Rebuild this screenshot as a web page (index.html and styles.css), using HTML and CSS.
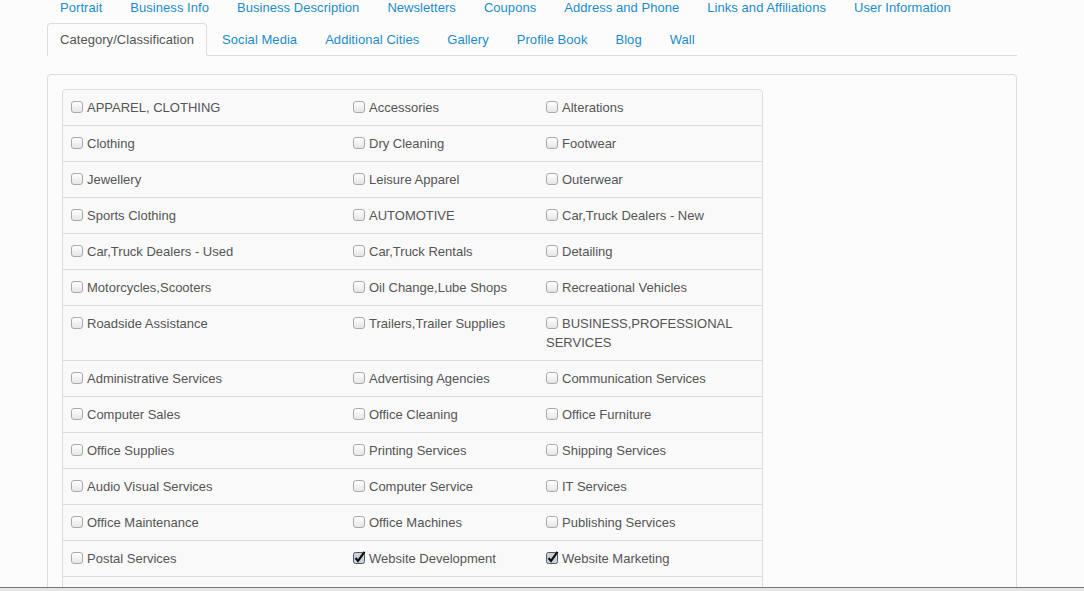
FILE: index.html
```html
<!DOCTYPE html>
<html>
<head>
<meta charset="utf-8">
<link rel="stylesheet" href="styles.css">
</head>
<body>
<div class="page">
  <ul class="nav-tabs">
    <li><a>Portrait</a></li>
    <li><a>Business Info</a></li>
    <li><a>Business Description</a></li>
    <li><a>Newsletters</a></li>
    <li><a>Coupons</a></li>
    <li><a>Address and Phone</a></li>
    <li><a>Links and Affiliations</a></li>
    <li><a>User Information</a></li>
    <li class="active"><a>Category/Classification</a></li>
    <li><a>Social Media</a></li>
    <li><a>Additional Cities</a></li>
    <li><a>Gallery</a></li>
    <li><a>Profile Book</a></li>
    <li><a>Blog</a></li>
    <li><a>Wall</a></li>
  </ul>
  <div class="panel">
    <table class="cats">
      <colgroup><col class="c1"><col class="c2"><col class="c3"></colgroup>
      <tr><td><span class="cb"></span>APPAREL, CLOTHING</td><td><span class="cb"></span>Accessories</td><td><span class="cb"></span>Alterations</td></tr>
      <tr><td><span class="cb"></span>Clothing</td><td><span class="cb"></span>Dry Cleaning</td><td><span class="cb"></span>Footwear</td></tr>
      <tr><td><span class="cb"></span>Jewellery</td><td><span class="cb"></span>Leisure Apparel</td><td><span class="cb"></span>Outerwear</td></tr>
      <tr><td><span class="cb"></span>Sports Clothing</td><td><span class="cb"></span>AUTOMOTIVE</td><td><span class="cb"></span>Car,Truck Dealers - New</td></tr>
      <tr><td><span class="cb"></span>Car,Truck Dealers - Used</td><td><span class="cb"></span>Car,Truck Rentals</td><td><span class="cb"></span>Detailing</td></tr>
      <tr><td><span class="cb"></span>Motorcycles,Scooters</td><td><span class="cb"></span>Oil Change,Lube Shops</td><td><span class="cb"></span>Recreational Vehicles</td></tr>
      <tr><td><span class="cb"></span>Roadside Assistance</td><td><span class="cb"></span>Trailers,Trailer Supplies</td><td><span class="cb"></span>BUSINESS,PROFESSIONAL SERVICES</td></tr>
      <tr><td><span class="cb"></span>Administrative Services</td><td><span class="cb"></span>Advertising Agencies</td><td><span class="cb"></span>Communication Services</td></tr>
      <tr><td><span class="cb"></span>Computer Sales</td><td><span class="cb"></span>Office Cleaning</td><td><span class="cb"></span>Office Furniture</td></tr>
      <tr><td><span class="cb"></span>Office Supplies</td><td><span class="cb"></span>Printing Services</td><td><span class="cb"></span>Shipping Services</td></tr>
      <tr><td><span class="cb"></span>Audio Visual Services</td><td><span class="cb"></span>Computer Service</td><td><span class="cb"></span>IT Services</td></tr>
      <tr><td><span class="cb"></span>Office Maintenance</td><td><span class="cb"></span>Office Machines</td><td><span class="cb"></span>Publishing Services</td></tr>
      <tr><td><span class="cb"></span>Postal Services</td><td><span class="cb checked"><svg width="13" height="13" viewBox="0 0 13 13"><rect x="0.5" y="1.5" width="11" height="11" rx="2" fill="#c9d3de" stroke="#556"/><path d="M2.5 7 L5 10 L11.5 0.8" fill="none" stroke="#111" stroke-width="2.2"/></svg></span>Website Development</td><td><span class="cb checked"><svg width="13" height="13" viewBox="0 0 13 13"><rect x="0.5" y="1.5" width="11" height="11" rx="2" fill="#c9d3de" stroke="#556"/><path d="M2.5 7 L5 10 L11.5 0.8" fill="none" stroke="#111" stroke-width="2.2"/></svg></span>Website Marketing</td></tr>
      <tr class="blank"><td></td><td></td><td></td></tr>
    </table>
  </div>
</div>
<div class="statusbar"></div>
</body>
</html>
```

FILE: styles.css
```css
html, body {
  margin: 0;
  padding: 0;
  overflow: hidden;
  background: #fcfcfc;
  font-family: "Liberation Sans", Arial, sans-serif;
  font-size: 13px;
  color: #555;
}

.page {
  width: 970px;
  margin: -9px 0 0 47px;
}

.nav-tabs {
  list-style: none;
  margin: 0;
  padding: 0;
  display: flex;
  flex-wrap: wrap;
  border-bottom: 1px solid #ddd;
}

.nav-tabs li {
  margin-bottom: -1px;
  margin-right: 2px;
}

.nav-tabs a {
  display: block;
  padding: 8px 12px;
  line-height: 15px;
  border: 1px solid transparent;
  border-radius: 4px 4px 0 0;
  color: #1c8bcb;
  letter-spacing: 0.05px;
  cursor: pointer;
}

.nav-tabs li.active a {
  color: #555;
  background: #fcfcfc;
  border-color: #ddd #ddd transparent;
}

.panel {
  margin-top: 18px;
  border: 1px solid #ddd;
  border-radius: 4px;
  padding: 14px;
  background: #fcfcfc;
  height: 600px;
}

.cats {
  width: 700px;
  border-collapse: separate;
  border-spacing: 0;
  border: 1px solid #ddd;
  border-radius: 4px;
  background: #f9f9f9;
  table-layout: fixed;
}

.cats col.c1 { width: 282px; }
.cats col.c2 { width: 193px; }
.cats col.c3 { width: 224px; }

.cats td {
  padding: 8px 8px;
  line-height: 19px;
  vertical-align: top;
  border-top: 1px solid #ddd;
}

.cats tr:first-child td {
  border-top: 0;
}

.cats tr.blank td {
  height: 19px;
}

.cb {
  display: inline-block;
  width: 10px;
  height: 10px;
  border: 1px solid #a9a9a9;
  border-radius: 3px;
  background: linear-gradient(#ffffff, #e6e6e6);
  vertical-align: -1px;
  margin-right: 4px;
  box-sizing: content-box;
}

.cb.checked {
  border: 0;
  background: none;
  width: 13px;
  height: 13px;
  margin-right: 3px;
  vertical-align: -1px;
}

.cb.checked svg {
  display: block;
}

.statusbar {
  position: fixed;
  left: 0;
  right: 0;
  bottom: 0;
  height: 3px;
  border-top: 1px solid #777;
  background: #e6e6e6;
}
```
